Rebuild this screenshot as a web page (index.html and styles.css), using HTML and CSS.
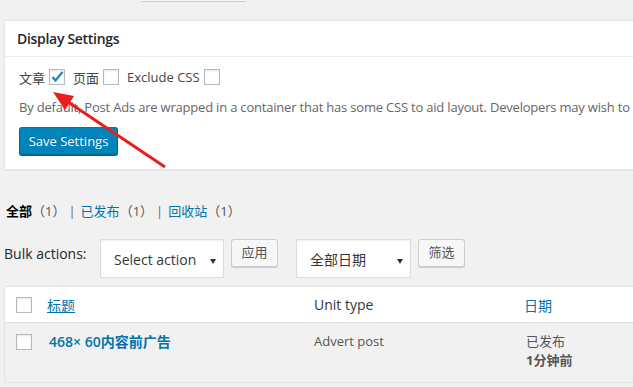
FILE: index.html
```html
<!DOCTYPE html>
<html lang="zh-CN">
<head>
    <meta charset="UTF-8">
    <title>Post Ads</title>
    <link rel="stylesheet" href="styles.css">
</head>
<body>
    <div class="wrap">
        <div class="top-stub"></div>

        <!-- Display settings box -->
        <div class="postbox">
            <h2 class="postbox-title">Display Settings</h2>
            <div class="inside">
                <div class="check-row">
                    <span class="check-label">文章</span>
                    <span class="checkbox">
                        <svg width="16" height="16" viewBox="0 0 16 16"><polyline points="3.5,8 6.5,11.5 13.5,3" fill="none" stroke="#1e8cbe" stroke-width="2.4"/></svg>
                    </span>
                    <span class="check-label">页面</span>
                    <span class="checkbox"></span>
                    <span class="check-label">Exclude CSS</span>
                    <span class="checkbox"></span>
                </div>
                <p class="description">By default, Post Ads are wrapped in a container that has some CSS to aid layout. Developers may wish to</p>
                <div class="button-primary">Save Settings</div>
            </div>
        </div>

        <!-- Status filter -->
        <ul class="subsubsub">
            <li class="current">全部<span class="count">（1）</span></li>
            <li class="sep">|</li>
            <li><a>已发布</a><span class="count">（1）</span></li>
            <li class="sep">|</li>
            <li><a>回收站</a><span class="count">（1）</span></li>
        </ul>

        <div class="tablenav">
            <span class="bulk-label">Bulk actions:</span>
            <div class="select select-action">Select action<span class="caret"></span></div>
            <div class="button">应用</div>
            <div class="select select-date">全部日期<span class="caret"></span></div>
            <div class="button">筛选</div>
        </div>

        <div class="list-table">
            <div class="table-row table-head">
                <div class="cell cell-check"><span class="checkbox"></span></div>
                <div class="cell cell-title"><a class="sort-link">标题</a></div>
                <div class="cell cell-type">Unit type</div>
                <div class="cell cell-date"><a>日期</a></div>
            </div>
            <div class="table-row table-item">
                <div class="cell cell-check"><span class="checkbox"></span></div>
                <div class="cell cell-title"><a class="row-title">468× 60内容前广告</a></div>
                <div class="cell cell-type">Advert post</div>
                <div class="cell cell-date">已发布<br><b>1分钟前</b></div>
            </div>
        </div>
    </div>

    <!-- annotation arrow -->
    <svg class="arrow" width="633" height="387" viewBox="0 0 633 387">
        <line x1="165" y1="167" x2="68" y2="102" stroke="#ee1b1b" stroke-width="3"/>
        <polygon points="53,92 74,96 65,110" fill="#ee1b1b"/>
    </svg>
</body>
</html>
```

FILE: styles.css
```css
body {
    margin: 0;
    background: #f1f1f1;
    font-family: "Open Sans", "Noto Sans CJK SC", sans-serif;
    font-size: 13px;
    color: #444;
    overflow: hidden;
    position: relative;
}
a {
    color: #0073aa;
}
.wrap {
    width: 760px;
    padding-left: 4px;
}
.top-stub {
    margin-left: 137px;
    width: 104px;
    height: 1px;
    background: #f7f7f7;
    border-bottom: 1px solid #ccc;
}
.postbox {
    margin-top: 18px;
    background: #fff;
    border: 1px solid #e5e5e5;
    box-shadow: 0 1px 1px rgba(0,0,0,0.04);
}
.postbox-title {
    margin: 0;
    padding: 0 12px;
    height: 35px;
    line-height: 35px;
    font-size: 14px;
    font-weight: 600;
    letter-spacing: -0.3px;
    color: #23282d;
    border-bottom: 1px solid #eee;
}
.inside {
    padding: 12px 14px 14px;
}
.check-row {
    display: flex;
    align-items: center;
    height: 16px;
}
.check-label {
    color: #444;
    margin-right: 4px;
}
.checkbox {
    display: inline-block;
    width: 16px;
    height: 16px;
    box-sizing: border-box;
    border: 1px solid #b4b9be;
    background: #fff;
    box-shadow: inset 0 1px 2px rgba(0,0,0,0.1);
    position: relative;
}
.checkbox svg {
    position: absolute;
    left: -1px;
    top: -1px;
}
.check-row .checkbox {
    margin-right: 8px;
}
.description {
    margin: 13px 0 0;
    line-height: 19px;
    color: #666;
    letter-spacing: -0.2px;
    white-space: nowrap;
}
.button-primary {
    margin-top: 10px;
    width: 99px;
    height: 28px;
    box-sizing: border-box;
    line-height: 26px;
    text-align: center;
    color: #fff;
    background: #0085ba;
    border: 1px solid;
    border-color: #0073aa #006799 #006799;
    border-radius: 3px;
    box-shadow: 0 1px 0 #006799;
    text-shadow: 0 -1px 1px #006799;
}
.subsubsub {
    list-style: none;
    margin: 31px 0 0;
    padding: 0 0 0 2px;
    display: flex;
    height: 20px;
    line-height: 20px;
}
.subsubsub li {
    color: #666;
}
.subsubsub .current {
    color: #000;
    font-weight: 600;
}
.subsubsub .count {
    color: #555;
    font-weight: normal;
}
.subsubsub .sep {
    margin: 0 5px 0 3px;
}
.tablenav {
    margin-top: 18px;
    display: flex;
    align-items: flex-start;
    height: 39px;
}
.bulk-label {
    width: 96px;
    padding-top: 1px;
    line-height: 28px;
    font-size: 14px;
    color: #23282d;
}
.select {
    position: relative;
    height: 39px;
    box-sizing: border-box;
    border: 1px solid #ddd;
    background: #fff;
    box-shadow: inset 0 1px 2px rgba(0,0,0,0.07);
    font-size: 14px;
    padding-top: 2px;
    line-height: 35px;
    color: #32373c;
    padding-left: 13px;
}
.select-action {
    width: 124px;
}
.select-date {
    width: 115px;
    margin-left: 18px;
}
.caret {
    position: absolute;
    right: 7px;
    top: 19px;
    border-left: 3px solid transparent;
    border-right: 3px solid transparent;
    border-top: 5px solid #333;
}
.button {
    margin-left: 7px;
    width: 47px;
    height: 28px;
    box-sizing: border-box;
    line-height: 24px;
    text-align: center;
    color: #555;
    background: #f7f7f7;
    border: 1px solid #ccc;
    border-radius: 3px;
    box-shadow: 0 1px 0 #ccc;
}
.list-table {
    margin-top: 8px;
    border: 1px solid #e5e5e5;
    box-shadow: 0 1px 1px rgba(0,0,0,0.04);
}
.table-row {
    display: grid;
    grid-template-columns: 34px 267px 210px 1fr;
}
.table-head {
    background: #fff;
    height: 35px;
    border-bottom: 1px solid #e1e1e1;
    align-items: center;
}
.table-head .cell {
    font-size: 14px;
    color: #32373c;
}
.cell {
    padding-left: 8px;
}
.cell-check {
    padding-left: 11px;
    display: flex;
}
.table-head .cell-check {
    align-items: center;
}
.sort-link {
    text-decoration: underline;
}
.table-item {
    background: #f1f1f1;
    height: 59px;
    line-height: 19px;
    color: #555;
}
.table-item .cell {
    padding-top: 9px;
}
.table-item .cell-check {
    padding-top: 11px;
    align-items: flex-start;
}
.row-title {
    font-size: 14px;
    font-weight: 600;
    padding-left: 2px;
}
.table-item .cell-date {
    padding-left: 10px;
}
.table-item b {
    font-weight: 700;
}
.arrow {
    position: absolute;
    left: 0;
    top: 0;
    pointer-events: none;
}
```
